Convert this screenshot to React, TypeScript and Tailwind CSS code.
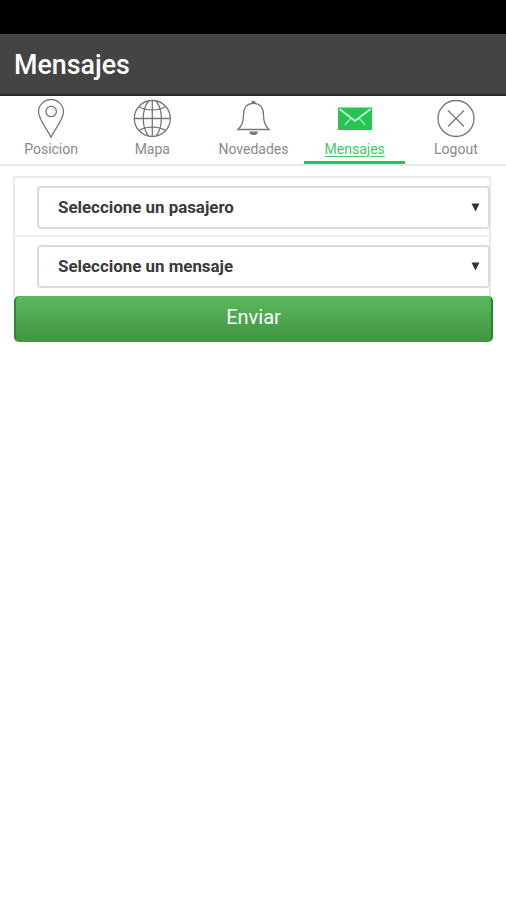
import React, { useState } from "react";

const PinIcon = () => (
    <svg width="40" height="40" viewBox="0 0 40 40" fill="none" stroke="currentColor" strokeWidth="1.3">
        <path d="M20 39.5C18.5 34.5 7.5 22 7.5 13.8a12.5 12.3 0 0 1 25 0C32.5 22 21.5 34.500 20 39.500Z" />
        <circle cx="20.2" cy="13.5" r="5.2" />
    </svg>
);

const GlobeIcon = () => (
    <svg width="40" height="40" viewBox="0 0 40 40" fill="none" stroke="currentColor" strokeWidth="1.3">
        <circle cx="20.3" cy="20.5" r="18" />
        <path d="M20.3 2.5v36M2.3 20.5h36" />
        <path d="M16.5 3C9.5 12 9.5 29 16.5 38M24.1 3c7 9 7 26 0 35" />
        <path d="M7 8.5c7 4.6 19.6 4.6 26.6 0M7 32.5c7-4.6 19.6-4.6 26.6 0" />
    </svg>
);

const BellIcon = () => (
    <svg width="40" height="40" viewBox="0 0 40 40" fill="none" stroke="currentColor" strokeWidth="1.3">
        <path d="M5 31.5c4.5-4 5.5-8 5.5-14.5C10.5 9.5 14 5.3 20.5 5.3S30.5 9.5 30.5 17c0 6.5 1 10.5 5.5 14.5Z" />
        <path d="M18.8 5a1.7 1.5 0 0 1 3.4 0Z" fill="currentColor" />
        <path d="M17 34.2h7c-.6 3-6.4 3-7 0Z" fill="currentColor" />
    </svg>
);

const MailIcon = () => (
    <svg width="40" height="40" viewBox="0 0 40 40" fill="none">
        <rect x="3" y="9.5" width="34" height="22.5" fill="#25c453" />
        <path d="M4.500 11 20 23l15.500-12" stroke="#d5f7dc" strokeWidth="1.700" />
        <path d="m9.700 27 6.500-7M30.300 27l-6.500-7" stroke="#a5ecb8" strokeWidth="1.300" />
    </svg>
);

const LogoutIcon = () => (
    <svg width="40" height="40" viewBox="0 0 40 40" fill="none" stroke="currentColor" strokeWidth="1.3">
        <circle cx="20" cy="20.5" r="18" />
        <path d="m12 12.500 16 16M28 12.500l-16 16" />
    </svg>
);

const tabs = [
    { id: "posicion", label: "Posicion", icon: PinIcon },
    { id: "mapa", label: "Mapa", icon: GlobeIcon },
    { id: "novedades", label: "Novedades", icon: BellIcon },
    { id: "mensajes", label: "Mensajes", icon: MailIcon },
    { id: "logout", label: "Logout", icon: LogoutIcon },
];

const SelectBox = ({ label }: { label: string }) => (
    <button className="flex h-[43px] w-full items-center justify-between rounded-[4px] border-2 border-[#dcdcdc] bg-white pl-[19px] pr-2 text-[16.9px] font-bold text-[#3a3a3a]">
        <span>{label}</span>
        <svg width="9" height="9" viewBox="0 0 9 9" fill="#333">
            <path d="M.5.500h8L4.500 8.500Z" />
        </svg>
    </button>
);

export default function App() {
    const [activeTab, setActiveTab] = useState("mensajes");

    return (
        <div className="min-h-screen bg-white font-['Roboto',sans-serif]">
            {/* Status bar */}
            <div className="h-[34px] bg-black" />

            <header className="flex h-[62px] items-center border-b-2 border-[#2a2a2a] bg-[#444] pl-[14px] pt-[2px]">
                <h1 className="text-[26.8px] font-medium leading-none text-white">Mensajes</h1>
            </header>

            <nav className="grid h-[70px] grid-cols-5 border-b-2 border-[#e9e9e9]">
                {tabs.map((tab) => {
                    const Icon = tab.icon;
                    const isActive = activeTab === tab.id;
                    return (
                        <button
                            key={tab.id}
                            onClick={() => setActiveTab(tab.id)}
                            className={`flex flex-col items-center border-b-3 pl-[1px] pt-[2px] ${isActive
                                ? "border-[#25c453] text-[#3ccb65]"
                                : "border-transparent text-[#777]"}`}
                        >
                            <Icon />
                            <span className={`text-[14px] leading-[22px] ${isActive ? "underline underline-offset-2" : "text-[#8a8a8a]"}`}>
                                {tab.label}
                            </span>
                        </button>
                    );
                })}
            </nav>

            <main className="px-[13px] pt-[10px]">
                <div className="mr-[2px] border-2 border-b-0 border-[#e9e9e9]">
                    <div className="-mr-px h-[59px] border-b-2 border-[#f0f0f0] pl-[22px] pt-[8px]">
                        <SelectBox label="Seleccione un pasajero" />
                    </div>
                    <div className="-mr-px h-[59px] pl-[22px] pt-[8px]">
                        <SelectBox label="Seleccione un mensaje" />
                    </div>
                </div>
                <button className="ml-[1px] flex h-[46px] w-[479px] items-center justify-center rounded-[5px] border-x-2 border-b border-[#28882f] border-b-[#3a943c] bg-linear-to-b from-[#5cb85c] to-[#419641] pb-[3px] text-[20px] text-white">
                    Enviar
                </button>
            </main>
        </div>
    );
}
